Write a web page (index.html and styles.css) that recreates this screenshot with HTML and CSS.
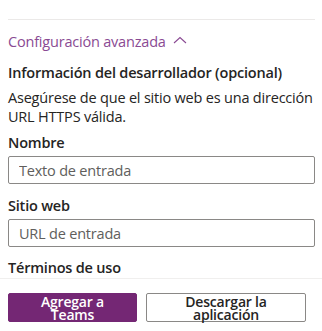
FILE: index.html
```html
<!DOCTYPE html>
<html lang="es">
<head>
  <meta charset="UTF-8">
  <title>Configuración avanzada</title>
  <link rel="stylesheet" href="styles.css">
</head>
<body>

<div class="panel">
  <div class="divider"></div>

  <a class="toggle" href="#">Configuración avanzada
    <svg class="chevron" width="14" height="8" viewBox="0 0 14 8"><path d="M1 7 L7 1.5 L13 7" fill="none" stroke="currentColor" stroke-width="1.1"/></svg>
  </a>

  <div class="section-title">Información del desarrollador (opcional)</div>
  <p class="hint">Asegúrese de que el sitio web es una dirección URL HTTPS válida.</p>

  <label class="field-label" for="name">Nombre</label>
  <input class="field" id="name" type="text" placeholder="Texto de entrada">

  <label class="field-label web" for="web">Sitio web</label>
  <input class="field" id="web" type="text" placeholder="URL de entrada">

  <div class="field-label terms">Términos de uso</div>
</div>

<div class="footer">
  <button class="btn primary"><span>Agregar a</span><span>Teams</span></button>
  <button class="btn secondary"><span>Descargar la</span><span>aplicación</span></button>
</div>

</body>
</html>
```

FILE: styles.css
```css
* {
  box-sizing: border-box;
  margin: 0;
  padding: 0;
}

body {
  font-family: "Open Sans", "Noto Sans", sans-serif;
  color: #252423;
  background: #fff;
  width: 322px;
  height: 331px;
  overflow: hidden;
}

.panel {
  padding: 19px 7px 0 8px;
  height: 278px;
}

.divider {
  height: 1px;
  background: #ebe9e8;
}

.toggle {
  display: flex;
  align-items: center;
  gap: 7px;
  margin-top: 11px;
  height: 20px;
  font-size: 14.5px;
  color: #8a4a93;
  text-decoration: none;
  letter-spacing: -0.2px;
}

.chevron {
  margin-top: -2px;
}

.section-title {
  margin-top: 12px;
  font-size: 14.5px;
  line-height: 20px;
  font-weight: 600;
  letter-spacing: -0.2px;
}

.hint {
  margin-top: 5px;
  font-size: 14.5px;
  line-height: 19px;
  letter-spacing: -0.2px;
}

.field-label {
  display: block;
  margin-top: 7px;
  font-size: 14.5px;
  line-height: 20px;
  font-weight: 600;
  letter-spacing: -0.2px;
}

.field-label.web {
  margin-top: 12px;
}

.field-label.terms {
  margin-top: 11px;
}

.field {
  display: block;
  width: 100%;
  height: 28px;
  margin-top: 3px;
  padding: 0 10px;
  border: 1px solid #8a8886;
  border-radius: 2px;
  font-family: inherit;
  font-size: 14.5px;
  color: #252423;
  letter-spacing: -0.2px;
  outline: none;
}

.field::placeholder {
  color: #605e5c;
}

.footer {
  border-top: 1px solid #f0efee;
  display: flex;
  gap: 9px;
  padding: 14px 0 0 8px;
}

.btn {
  height: 29px;
  display: flex;
  flex-direction: column;
  align-items: center;
  justify-content: center;
  font-family: inherit;
  font-size: 14px;
  font-weight: 600;
  line-height: 13px;
  border-radius: 2px;
  letter-spacing: -0.2px;
}

.btn span {
  display: block;
  height: 13px;
}

.btn.primary {
  width: 129px;
  background: #742774;
  border: 1px solid #742774;
  color: #fff;
}

.btn.secondary {
  width: 160px;
  background: #fff;
  border: 1px solid #8a8886;
  color: #252423;
}
```
